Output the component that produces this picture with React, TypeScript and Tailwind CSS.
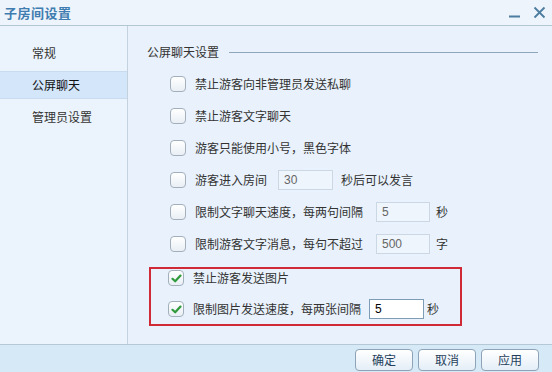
import React from 'react';

const font = { fontFamily: '"Noto Sans CJK SC", "Noto Sans", sans-serif' };

const CheckBox = ({ checked }: { checked?: boolean }) => (
  <span className="flex h-[16px] w-[16px] shrink-0 items-center justify-center rounded-[4px] border border-[#a3b0bb] bg-gradient-to-b from-white to-[#e9eff5]">
    {checked && (
      <svg width="11" height="9" viewBox="0 0 11 9">
        <path d="M1.5 4.8 L4.2 7.3 L9.5 1.6" fill="none" stroke="#2f9a3b" strokeWidth="2.2" strokeLinecap="round" strokeLinejoin="round" />
      </svg>
    )}
  </span>
);

const NumInput = ({ value, active, className }: { value: string; active?: boolean; className: string }) => (
  <span
    className={`flex h-[20px] items-center pl-[5px] text-[12px] ${className} ${
      active ? 'border border-[#7d9db6] bg-white text-black' : 'border border-[#cbd8e3] bg-[#eff5fc] text-[#666]'
    }`}
    style={{ fontFamily: '"Liberation Sans", Arial, sans-serif' }}
  >
    {value}
  </span>
);

const Row = ({ children, checked, className = 'h-[32px]' }: { children: React.ReactNode; checked?: boolean; className?: string }) => (
  <div className={`flex items-center pl-[23px] text-[12px] text-[#333] ${className}`}>
    <CheckBox checked={checked} />
    <div className="ml-[9px] flex items-center">{children}</div>
  </div>
);

export default function App() {
  return (
    <div className="flex h-[372px] w-[552px] flex-col overflow-hidden bg-[#e9f2fc]" style={font}>
      {/* title bar */}
      <div className="flex h-[26px] shrink-0 items-center justify-between border-b border-[#b3c6d4] bg-[#eef4fb] pl-[4px] pr-[6px]">
        <span className="text-[13px] font-bold tracking-[0.5px] text-[#3f7db0]">子房间设置</span>
        <div className="flex items-center gap-[12px]">
          <svg width="13" height="13" viewBox="0 0 13 13">
            <path d="M1 10.5 H12" stroke="#4d7d9f" strokeWidth="2" />
          </svg>
          <svg width="13" height="13" viewBox="0 0 13 13">
            <path d="M1.5 1.5 L11.5 11.5 M11.5 1.5 L1.5 11.5" stroke="#4d7d9f" strokeWidth="1.8" />
          </svg>
        </div>
      </div>

      {/* body */}
      <div className="flex h-[319px] shrink-0 border-b border-[#b5c8d6]">
        <aside className="flex w-[128px] shrink-0 flex-col gap-[4px] border-r border-[#c3d2de] bg-[#ebf3fc] pt-[13px] text-[12px] text-[#333]">
          <div className="flex h-[28px] items-center pl-[32px]">常规</div>
          <div className="flex h-[28px] items-center border-y border-[#c9dcef] bg-[#d3e6fa] pl-[32px] text-[#111]">公屏聊天</div>
          <div className="flex h-[28px] items-center pl-[32px]">管理员设置</div>
        </aside>

        <section className="flex flex-1 flex-col pl-[19px] pt-[16px]">
          <div className="flex h-[20px] items-center pr-[14px] text-[12px] text-[#333]">
            <span>公屏聊天设置</span>
            <span className="ml-[10px] h-px flex-1 bg-[#8fa7b9]" />
          </div>

          <div className="mt-[6px] flex flex-col">
            <Row>禁止游客向非管理员发送私聊</Row>
            <Row>禁止游客文字聊天</Row>
            <Row>游客只能使用小号，黑色字体</Row>
            <Row>
              <span>游客进入房间</span>
              <NumInput value="30" className="ml-[11px] w-[55px]" />
              <span className="ml-[8px]">秒后可以发言</span>
            </Row>
            <Row>
              <span>限制文字聊天速度，每两句间隔</span>
              <NumInput value="5" className="ml-[13px] w-[54px]" />
              <span className="ml-[6px]">秒</span>
            </Row>
            <Row>
              <span>限制游客文字消息，每句不超过</span>
              <NumInput value="500" className="ml-[13px] w-[54px]" />
              <span className="ml-[6px]">字</span>
            </Row>
          </div>

          {/* highlighted group */}
          <div className="ml-[2px] mt-[7px] flex w-[313px] flex-col gap-[11px] pb-[7px] pt-px ring-2 ring-inset ring-[#d02a36]">
            <Row checked className="h-[20px] -ml-[4px]">
              禁止游客发送图片
            </Row>
            <Row checked className="h-[20px] -ml-[4px]">
              <span>限制图片发送速度，每两张间隔</span>
              <NumInput value="5" active className="ml-[8px] w-[55px]" />
              <span className="ml-[3px]">秒</span>
            </Row>
          </div>
        </section>
      </div>

      {/* footer */}
      <div className="flex flex-1 items-start justify-end gap-[5px] bg-[#d5e9f7] pr-[13px] pt-[4px]">
        {['确定', '取消', '应用'].map((label) => (
          <button
            key={label}
            type="button"
            className="flex h-[22px] w-[58px] items-center justify-center rounded-[4px] border border-[#8ea4b6] bg-gradient-to-b from-white to-[#e4eef7] text-[12px] text-[#1f3f5c]"
          >
            {label}
          </button>
        ))}
      </div>
    </div>
  );
}
